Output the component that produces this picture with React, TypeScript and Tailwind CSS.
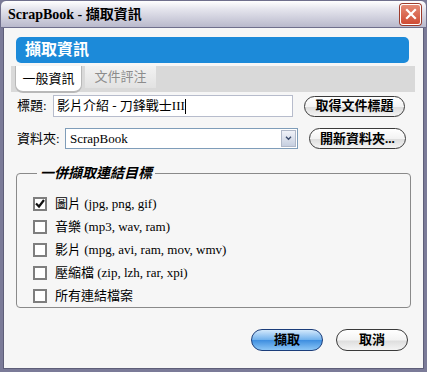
import React from 'react';

const font = { fontFamily: '"Liberation Serif", "Noto Sans CJK TC", serif' };

function Pill({ children, primary = false, className = '' }: { children: React.ReactNode; primary?: boolean; className?: string }) {
  return (
    <button
      className={
        'flex items-center justify-center rounded-full border font-bold text-[13px] text-black ' +
        (primary
          ? 'border-[#1b3d7a] bg-[linear-gradient(#d2e8fb,#6fb0ec_50%,#3f8fe0_52%,#8cc6f6)] '
          : 'border-[#3a3a3a] bg-[linear-gradient(#ffffff,#f3f3f3_50%,#dedede_55%,#f4f4f4)] ') +
        className
      }
    >
      {children}
    </button>
  );
}

function Check({ checked = false, label }: { checked?: boolean; label: React.ReactNode }) {
  return (
    <div className="flex items-center h-[23px]">
      <div className="w-[14px] h-[14px] border-2 border-[#7e7e7e] bg-white flex items-center justify-center">
        {checked && (
          <svg viewBox="0 0 10 10" className="w-[11px] h-[11px]">
            <path d="M1 5 L4 8 L9 1.5" fill="none" stroke="#111" strokeWidth="2.2" />
          </svg>
        )}
      </div>
      <span className="ml-[8px] text-[13px] text-black">{label}</span>
    </div>
  );
}

export default function App() {
  return (
    <div style={font} className="w-[427px] h-[372px] flex flex-col bg-[#7b7b98] overflow-hidden">
      {/* 標題列 */}
      <div className="h-[28px] flex items-center justify-between pl-[7px] pr-[5px] rounded-t-[6px] border border-[#6f6f8c] bg-[linear-gradient(#ffffff,#e6e6ee_30%,#b9b9cc)]">
        <span className="text-[14px] font-bold text-black">ScrapBook - 擷取資訊</span>
        <div className="w-[21px] h-[21px] rounded-[3px] border border-white bg-[linear-gradient(#e58b76,#cf4b33)] flex items-center justify-center shadow-[0_0_0_1px_#9c3b2c]">
          <svg viewBox="0 0 12 12" className="w-[12px] h-[12px]">
            <path d="M2 2 L10 10 M10 2 L2 10" stroke="white" strokeWidth="2.2" strokeLinecap="square" />
          </svg>
        </div>
      </div>

      {/* 本文 */}
      <div className="flex-1 mx-[3px] mb-[3px] bg-[#f6f6f6] border-x border-b border-[#5e5e78] flex flex-col">
        <div className="mt-[9px] ml-[12px] mr-[14px] h-[26px] rounded-[5px] bg-[#1c8ad9] flex items-center pl-[9px]">
          <span className="text-white font-bold text-[16px]">擷取資訊</span>
        </div>

        {/* 分頁 */}
        <div className="mt-[3px] ml-[7px] mr-[8px] h-[26px] bg-[#d9d9d9] flex">
          <div className="ml-[4px] w-[67px] h-[27px] bg-white rounded-b-[8px] border-b-2 border-x border-[#b8b8b8] flex items-center justify-center text-[13px] text-black">
            一般資訊
          </div>
          <div className="ml-[3px] w-[71px] h-[22px] bg-[linear-gradient(#f2f2f2,#e2e2e2)] flex items-center justify-center text-[13px] text-[#8c8c8c]">
            文件評注
          </div>
        </div>

        {/* 標題 */}
        <div className="mt-[3px] flex items-center h-[22px]">
          <span className="ml-[13px] w-[36px] text-[13px] text-black">標題:</span>
          <div className="w-[240px] h-[22px] bg-white border border-[#b7bccc] flex items-center pl-[3px] text-[13px] text-black">
            影片介紹 - 刀鋒戰士III<span className="w-px h-[15px] bg-black" />
          </div>
          <Pill className="ml-[11px] w-[101px] h-[21px]">取得文件標題</Pill>
        </div>

        {/* 資料夾 */}
        <div className="mt-[11px] flex items-center h-[21px]">
          <span className="ml-[13px] w-[48px] text-[13px] text-black">資料夾:</span>
          <div className="w-[233px] h-[21px] bg-white border border-[#7f9db9] flex items-center justify-between pl-[4px] pr-[1px] text-[13px] text-black">
            ScrapBook
            <div className="w-[15px] h-[17px] border border-[#b0b8c8] bg-[linear-gradient(#f0f2f8,#c6cfe0)] flex items-center justify-center">
              <svg viewBox="0 0 8 6" className="w-[7px] h-[5px]">
                <path d="M1 1 L4 4 L7 1" fill="none" stroke="#3a4a6a" strokeWidth="1.6" />
              </svg>
            </div>
          </div>
          <Pill className="ml-[11px] w-[97px] h-[21px]">開新資料夾...</Pill>
        </div>

        {/* 一併擷取連結目標 */}
        <fieldset className="mt-[14px] ml-[12px] mr-[12px] h-[145px] border border-[#8a8a8a] rounded-[4px] pl-[16px] pt-[8px]">
          <legend className="ml-[4px] px-[3px] italic font-bold text-[14px] text-black">一併擷取連結目標</legend>
          <Check checked label="圖片 (jpg, png, gif)" />
          <Check label="音樂 (mp3, wav, ram)" />
          <Check label="影片 (mpg, avi, ram, mov, wmv)" />
          <Check label="壓縮檔 (zip, lzh, rar, xpi)" />
          <Check label="所有連結檔案" />
        </fieldset>

        {/* 按鈕 */}
        <div className="mt-[21px] mr-[15px] flex justify-end gap-[13px]">
          <Pill primary className="w-[72px] h-[22px]">擷取</Pill>
          <Pill className="w-[72px] h-[22px]">取消</Pill>
        </div>
      </div>
    </div>
  );
}
